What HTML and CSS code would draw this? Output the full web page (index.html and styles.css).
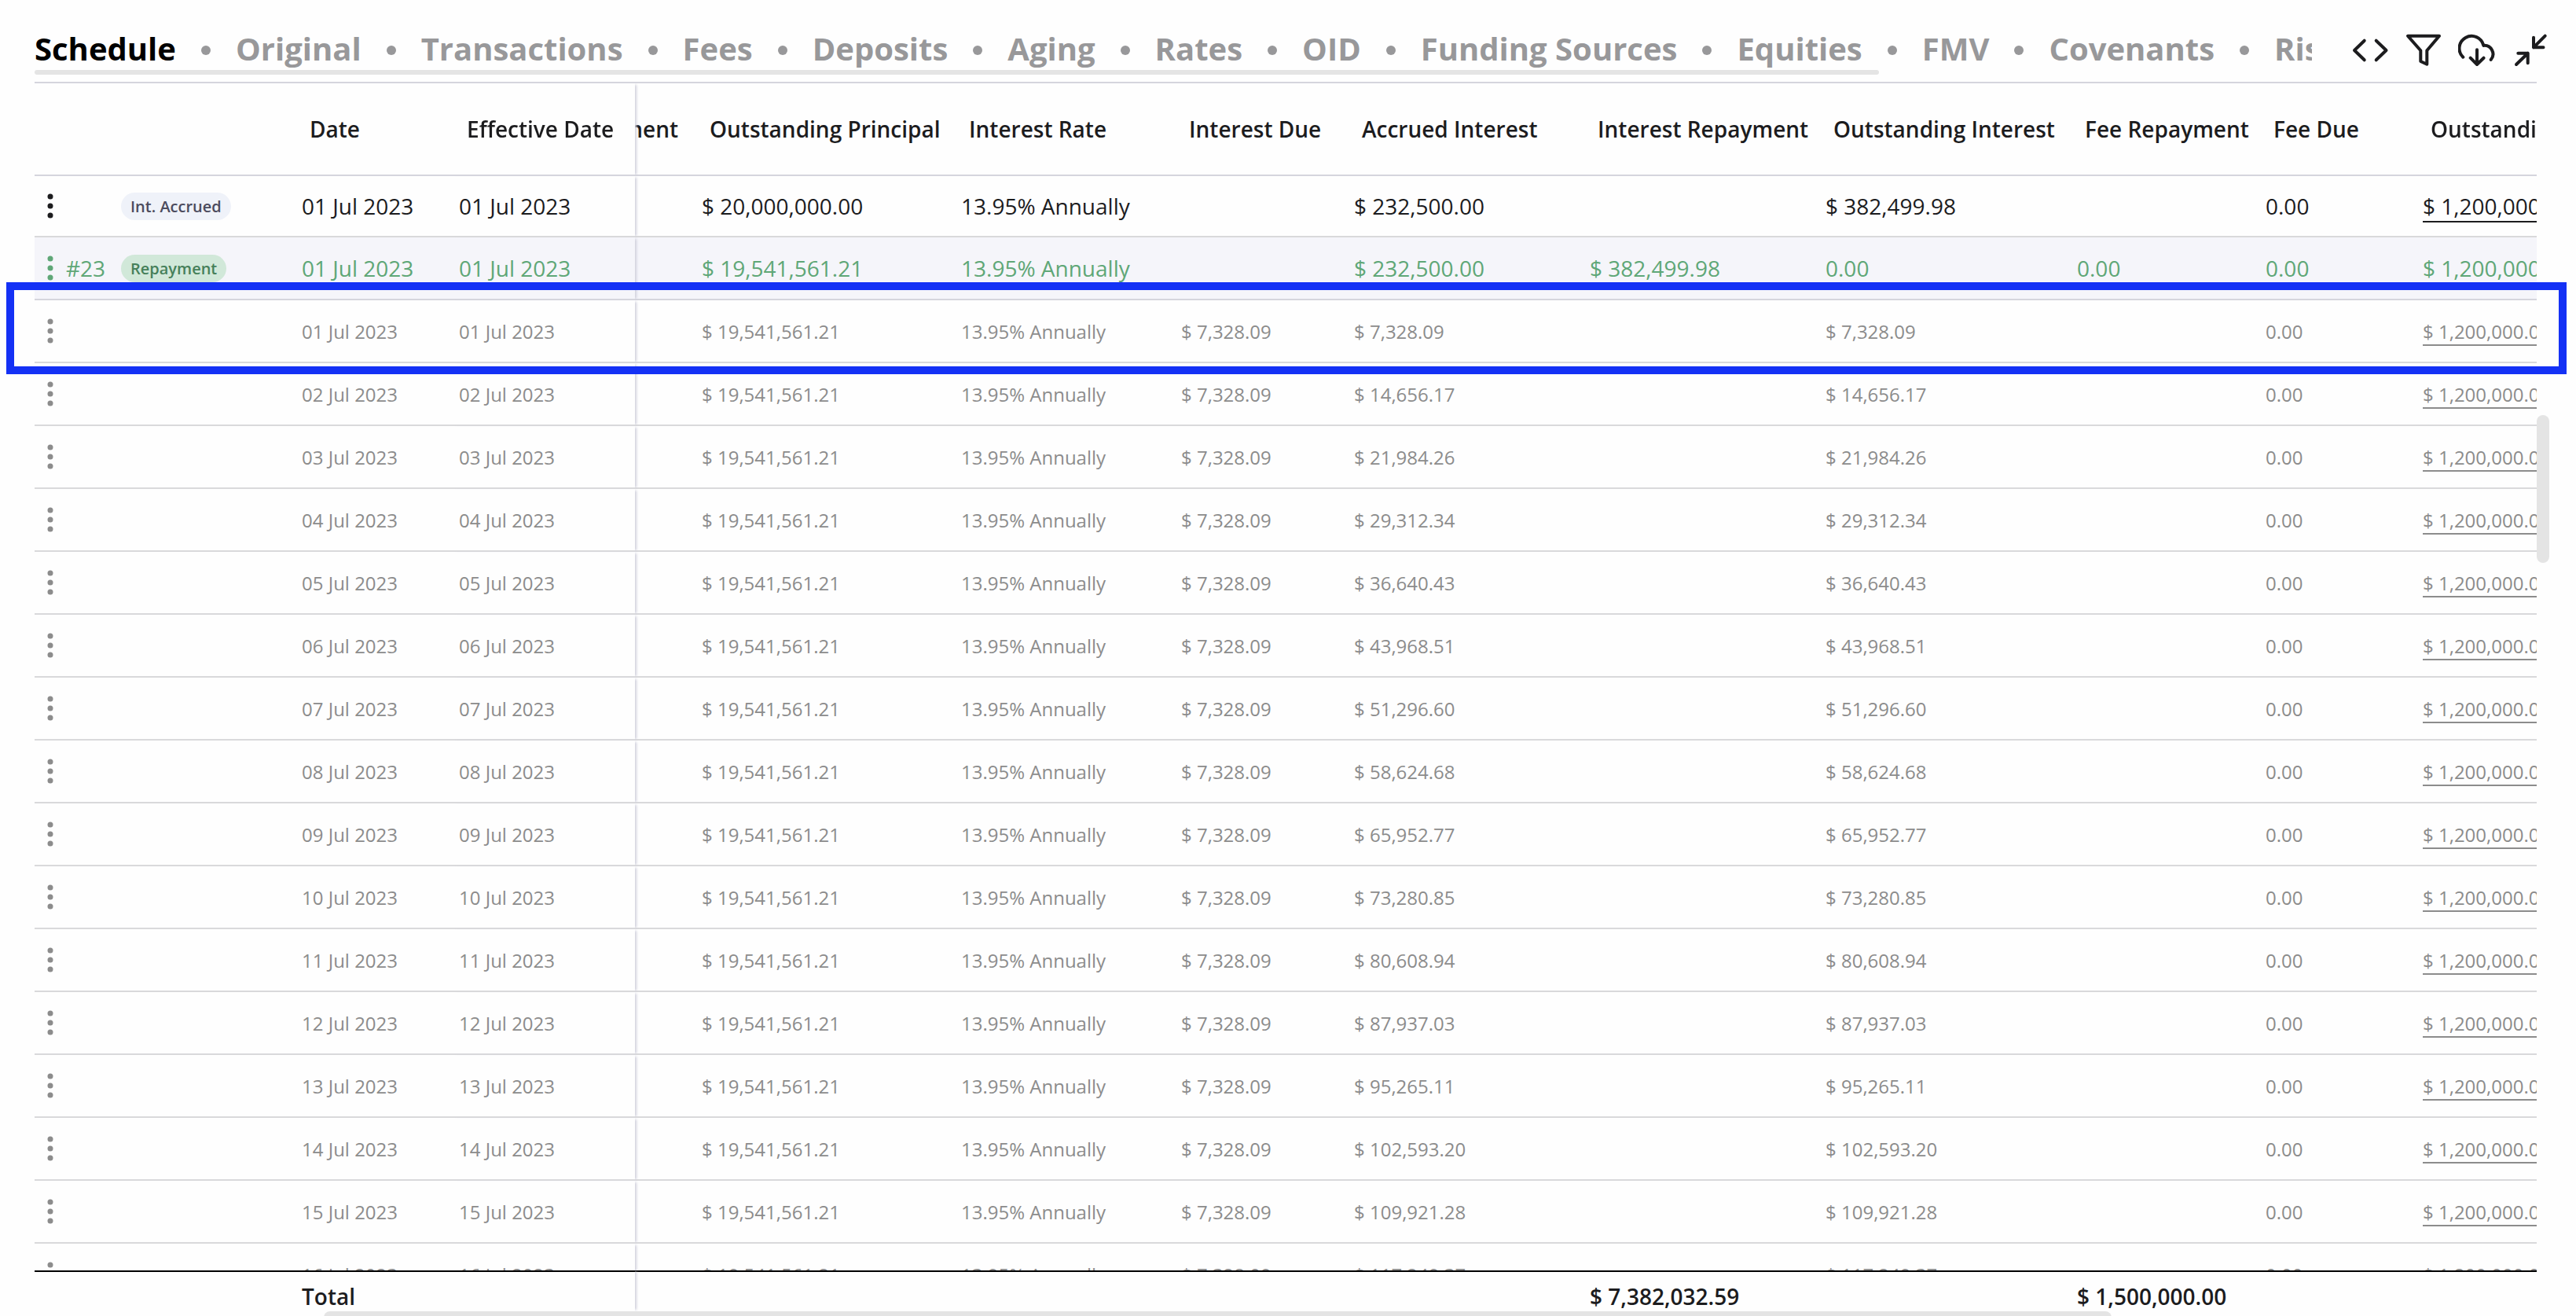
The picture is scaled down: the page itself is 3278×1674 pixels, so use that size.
FILE: index.html
```html
<!DOCTYPE html>
<html lang="en">
<head>
    <meta charset="UTF-8">
    <meta name="viewport" content="width=device-width, initial-scale=1.0">
    <title>Schedule</title>
    <link rel="stylesheet" href="styles.css">
</head>

<body>
    <main class="panel">
        <header class="toolbar">
            <div class="tabs">
                <nav class="tabList">
                    <a href="#schedule" class="tab active">Schedule</a>
                    <a href="#original" class="tab">Original</a>
                    <a href="#transactions" class="tab">Transactions</a>
                    <a href="#fees" class="tab">Fees</a>
                    <a href="#deposits" class="tab">Deposits</a>
                    <a href="#aging" class="tab">Aging</a>
                    <a href="#rates" class="tab">Rates</a>
                    <a href="#oid" class="tab">OID</a>
                    <a href="#funding" class="tab">Funding Sources</a>
                    <a href="#equities" class="tab">Equities</a>
                    <a href="#fmv" class="tab">FMV</a>
                    <a href="#covenants" class="tab">Covenants</a>
                    <a href="#risk" class="tab">Risk</a>
                </nav>
                <div class="tabThumb"></div>
            </div>
            <div class="tools">
                <button type="button" class="tool" aria-label="Code">
                    <svg viewBox="0 0 48 48"><path d="M16.7 11.7 4 24l12.7 12.3M31.7 11.7 44.5 24 31.7 36.3"/></svg>
                </button>
                <button type="button" class="tool" aria-label="Filter">
                    <svg viewBox="0 0 48 48"><path d="M4 5.7h40L28.3 24.3v17.4l-8-3.7V24.3z"/></svg>
                </button>
                <button type="button" class="tool" aria-label="Download">
                    <svg viewBox="0 0 48 48"><path d="M6.3 32.7A15.6 15.6 0 1 1 32.3 17.9A11 11 0 0 1 41.7 36M24 23.3V42M15.7 33.7 24 42l8.500-8.300"/></svg>
                </button>
                <button type="button" class="tool" aria-label="Collapse">
                    <svg viewBox="0 0 48 48"><path d="M42.7 5.7 28 20.3M28 7.7v12.600h12.500M6 42l14.700-14.300M8.300 27.700h12.400v12.600"/></svg>
                </button>
            </div>
        </header>

        <div class="grid">
            <div class="scroller">
                <table class="schedule">
                    <colgroup>
                        <col class="colMenu">
                        <col class="colNumber">
                        <col class="colType">
                        <col class="colDate">
                        <col class="colEffective">
                        <col class="colPrincipal">
                        <col class="colOutPrincipal">
                        <col class="colRate">
                        <col class="colIntDue">
                        <col class="colAccrued">
                        <col class="colIntRepay">
                        <col class="colOutInterest">
                        <col class="colFeeRepay">
                        <col class="colFeeDue">
                        <col>
                    </colgroup>
                    <thead>
                        <tr>
                            <th></th>
                            <th></th>
                            <th></th>
                            <th>Date</th>
                            <th class="frozenEdge">Effective Date</th>
                            <th class="cut"><div>Principal Repayment</div></th>
                            <th>Outstanding Principal</th>
                            <th>Interest Rate</th>
                            <th>Interest Due</th>
                            <th>Accrued Interest</th>
                            <th>Interest Repayment</th>
                            <th>Outstanding Interest</th>
                            <th>Fee Repayment</th>
                            <th>Fee Due</th>
                            <th>Outstanding Fee</th>
                        </tr>
                    </thead>
                    <tbody id="rows"></tbody>
                    <tfoot>
                        <tr>
                            <td></td>
                            <td></td>
                            <td></td>
                            <td>Total</td>
                            <td class="frozenEdge"></td>
                            <td></td>
                            <td></td>
                            <td></td>
                            <td></td>
                            <td></td>
                            <td>$ 7,382,032.59</td>
                            <td></td>
                            <td>$ 1,500,000.00</td>
                            <td></td>
                            <td></td>
                        </tr>
                    </tfoot>
                </table>
            </div>
            <div class="track"><div class="thumb"></div></div>
            <div class="highlight"></div>
        </div>
        <div class="bottomTrack"><div class="bottomThumb"></div></div>
    </main>

    <script>
        const rate = "13.95% Annually";
        const rows = [
            { kind: "accrued", label: "Int. Accrued", date: "01 Jul 2023", cells: ["$ 20,000,000.00", rate, "", "$ 232,500.00", "", "$ 382,499.98", "", "0.00", "$ 1,200,000.00"] },
            { kind: "repayment", number: "#23", label: "Repayment", date: "01 Jul 2023", cells: ["$ 19,541,561.21", rate, "", "$ 232,500.00", "$ 382,499.98", "0.00", "0.00", "0.00", "$ 1,200,000.00"] }
        ];

        // interest accrued at the end of each day, starting from 01 Jul
        const accrued = [
            "7,328.09", "14,656.17", "21,984.26", "29,312.34", "36,640.43", "43,968.51",
            "51,296.60", "58,624.68", "65,952.77", "73,280.85", "80,608.94", "87,937.03",
            "95,265.11", "102,593.20", "109,921.28", "117,249.37"
        ];
        accrued.forEach((amount, i) => {
            const day = String(i + 1).padStart(2, "0");
            rows.push({
                kind: "daily",
                date: day + " Jul 2023",
                cells: ["$ 19,541,561.21", rate, "$ 7,328.09", "$ " + amount, "", "$ " + amount, "", "0.00", "$ 1,200,000.00"]
            });
        });

        const menu = '<button type="button" class="menu" aria-label="Row menu"><svg viewBox="0 0 8 32"><circle cx="4" cy="4" r="3.5"/><circle cx="4" cy="16" r="3.5"/><circle cx="4" cy="28" r="3.5"/></svg></button>';

        document.getElementById("rows").innerHTML = rows.map(row => {
            const last = row.cells.length - 1;
            const cells = row.cells.map((cell, i) => i === last ? `<td><a href="#fee">${cell}</a></td>` : `<td>${cell}</td>`);
            const badge = row.label ? `<span class="badge">${row.label}</span>` : "";
            return `<tr class="${row.kind}">
                <td class="menuCell">${menu}</td>
                <td>${row.number || ""}</td>
                <td>${badge}</td>
                <td>${row.date}</td>
                <td class="frozenEdge">${row.date}</td>
                <td></td>
                ${cells.join("")}
            </tr>`;
        }).join("");
    </script>
</body>

</html>
```
FILE: styles.css
```css
* {
    box-sizing: border-box;
    margin: 0;
    padding: 0;
}
body {
    background-color: #fefefe;
    color: #1c1c1e;
    font-family: "Open Sans", "Noto Sans", sans-serif;
    font-size: 28px;
}
button {
    background: none;
    border: none;
    cursor: pointer;
}
.panel {
    display: flex;
    flex-direction: column;
    height: 100vh;
    padding: 0 34px 0 44px;
    overflow: hidden;
}

/* tabs */
.toolbar {
    display: flex;
    flex: none;
    gap: 50px;
    height: 104px;
    padding-top: 32px;
}
.tabs {
    flex: 1;
    min-width: 0;
    overflow: hidden;
}
.tabList {
    display: flex;
    align-items: flex-end;
    height: 57px;
}
.tab {
    display: flex;
    align-items: center;
    flex: none;
    color: #98989a;
    font-size: 40px;
    font-weight: 700;
    line-height: 54px;
    text-decoration: none;
}
.tab + .tab::before {
    content: "";
    width: 12px;
    height: 12px;
    margin: 4px 32px 0;
    border-radius: 50%;
    background-color: #98989a;
}
.tab.active {
    color: #000;
}
.tabThumb {
    width: 81%;
    height: 6px;
    border-radius: 3px;
    background-color: #e4e4e4;
}
.tools {
    display: flex;
    flex: none;
    gap: 20px;
    padding-top: 8px;
}
.tool {
    width: 48px;
    height: 48px;
}
.tool svg {
    display: block;
    fill: none;
    stroke: #1c1c1e;
    stroke-width: 4;
    stroke-linecap: round;
    stroke-linejoin: round;
}

/* table */
.grid {
    position: relative;
    display: flex;
    flex: 1;
    min-height: 0;
}
.scroller {
    flex: 1;
    min-width: 0;
    overflow: hidden;
    border-top: 2px solid #d5d5dd;
}
.schedule {
    width: 100%;
    table-layout: fixed;
    border-collapse: separate;
    border-spacing: 0;
}
.colMenu { width: 30px; }
.colNumber { width: 70px; }
.colType { width: 230px; }
.colDate { width: 200px; }
.colEffective { width: 234px; }
.colPrincipal { width: 75px; }
.colOutPrincipal { width: 330px; }
.colRate { width: 280px; }
.colIntDue { width: 220px; }
.colAccrued { width: 300px; }
.colIntRepay { width: 300px; }
.colOutInterest { width: 320px; }
.colFeeRepay { width: 240px; }
.colFeeDue { width: 200px; }

th, td {
    height: 80px;
    padding: 0 10px;
    border-bottom: 2px solid #d9d9db;
    text-align: left;
    vertical-align: middle;
    white-space: nowrap;
}
th {
    position: sticky;
    top: 0;
    z-index: 2;
    height: 118px;
    padding: 0 0 0 20px;
    border-color: #d5d5dd;
    background-color: #fefefe;
    font-weight: 600;
}
.cut {
    padding: 0 20px 0 0;
}
.cut div {
    display: flex;
    justify-content: flex-end;
    overflow: hidden;
}
tbody tr:first-child td {
    height: 78px;
}
.frozenEdge {
    position: relative;
    z-index: 1;
    box-shadow: 4px 0 3px -2px #d0d0dc;
}
th.frozenEdge {
    position: sticky;
    z-index: 3;
}
td a {
    border-bottom: 2px solid;
    color: inherit;
    text-decoration: none;
}
.menuCell {
    padding: 0;
}
.menu {
    display: block;
    width: 8px;
    height: 32px;
    margin-left: 16px;
    color: inherit;
}
.menu svg {
    display: block;
    fill: currentColor;
}
.badge {
    display: block;
    width: fit-content;
    padding: 0 12px;
    border-radius: 18px;
    background-color: #eff2f9;
    color: #4c4c5e;
    font-size: 20px;
    font-weight: 600;
    line-height: 35px;
}
.repayment td {
    border-color: #d5d5dd;
    background-color: #f5f5fa;
    color: #5fa777;
}
.repayment .badge {
    background-color: #d1e8d9;
    color: #46805a;
}
.repayment a {
    border-color: transparent;
}
.daily td {
    color: #8c8c8c;
    font-size: 24px;
}
tfoot td {
    position: sticky;
    bottom: 0;
    z-index: 2;
    height: 52px;
    padding-top: 12px;
    border-top: 2px solid #000;
    border-bottom: none;
    background-color: #fefefe;
    font-weight: 600;
}
tfoot .frozenEdge {
    position: sticky;
    z-index: 3;
}

/* scroll bars */
.track {
    flex: none;
    position: relative;
    width: 16px;
}
.thumb {
    position: absolute;
    top: 27.1%;
    width: 16px;
    height: 12%;
    border-radius: 8px;
    background-color: #e4e4e4;
}
.bottomTrack {
    flex: none;
    height: 6px;
    overflow: hidden;
}
.bottomThumb {
    width: 71.1%;
    height: 16px;
    margin-left: 11.5%;
    border-radius: 8px;
    background-color: #e4e4e4;
}

/* marked row */
.highlight {
    position: absolute;
    top: 255px;
    left: -36px;
    right: -22px;
    z-index: 4;
    height: 117px;
    border: 10px solid #1431f5;
    pointer-events: none;
}
```
